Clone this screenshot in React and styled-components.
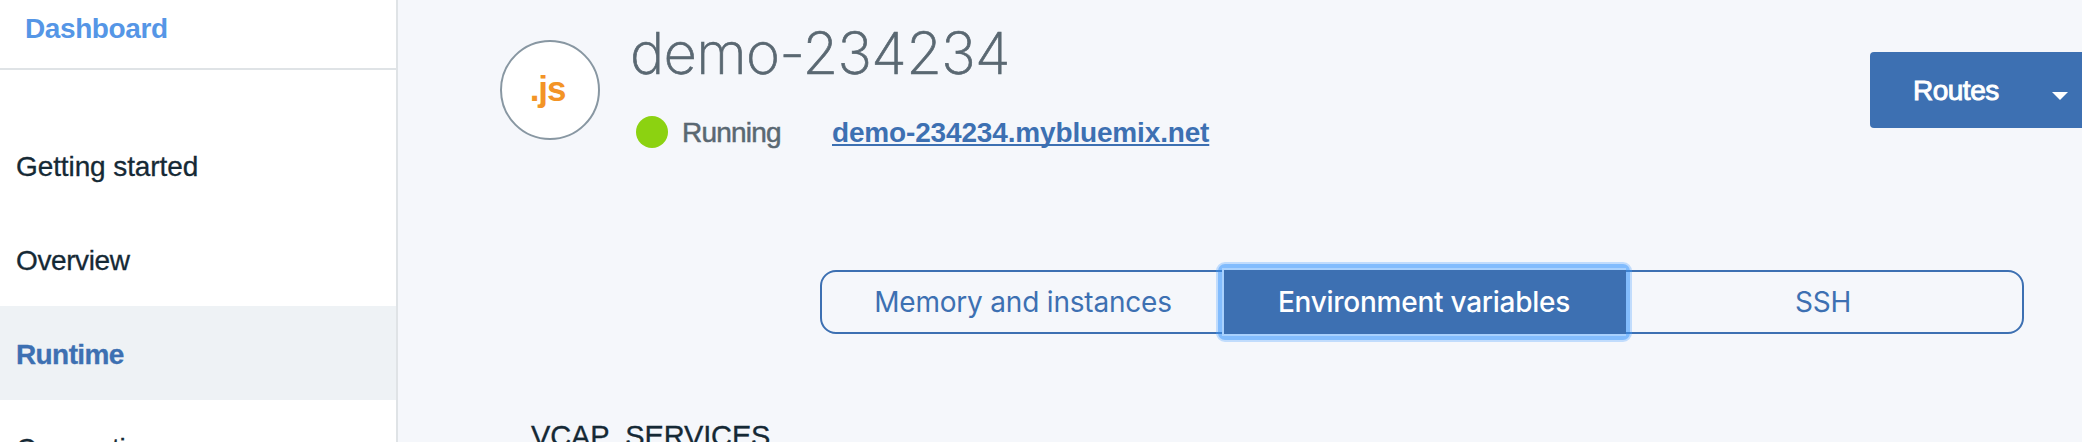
import React from "react";
import styled, { createGlobalStyle } from "styled-components";

const blue = "#3d70b2";

const GlobalStyle = createGlobalStyle`
  * { box-sizing: border-box; }
  body {
    margin: 0;
    overflow: hidden;
    background: #f5f7fb;
    font-family: "Liberation Sans", Arial, sans-serif;
    font-size: 28px;
    color: #152935;
  }
`;

const Page = styled.div`
  display: flex;
  width: 2082px;
  height: 442px;
  overflow: hidden;
`;

const Sidebar = styled.aside`
  width: 398px;
  flex: none;
  background: #fff;
  border-right: 2px solid #dfe3e6;
`;

const SidebarTitle = styled.div`
  height: 70px;
  padding: 13px 0 0 25px;
  border-bottom: 2px solid #dfe3e6;
  color: #5596e6;
  font-weight: 700;
  line-height: 32px;
  letter-spacing: -0.4px;
`;

const Nav = styled.nav`
  padding-top: 48px;
`;

const NavItem = styled.a`
  display: block;
  height: 94px;
  padding: 2px 0 0 16px;
  line-height: 94px;
  white-space: nowrap;
  letter-spacing: ${(p) => p.$spacing || "-0.1px"};
  background: ${(p) => (p.$active ? "#eef2f5" : "transparent")};
  color: ${(p) => (p.$active ? blue : "#152935")};
  font-weight: ${(p) => (p.$active ? 700 : 400)};
  -webkit-text-stroke: 0.3px currentColor;
`;

const Main = styled.main`
  flex: 1;
  min-width: 0;
`;

const Header = styled.header`
  display: flex;
  height: 270px;
  padding-left: 102px;
`;

const RuntimeBadge = styled.div`
  width: 100px;
  height: 100px;
  margin: 40px 30px 0 0;
  padding: 0 5px 0 0;
  border: 2px solid #8897a2;
  border-radius: 50%;
  background: #fff;
  color: #f39426;
  font-size: 35px;
  font-weight: 700;
  line-height: 94px;
  letter-spacing: -1.2px;
  text-align: center;
`;

const AppInfo = styled.div`
  flex: 1;
  padding-top: 18px;
`;

const AppName = styled.h1`
  margin: 0;
  height: 98px;
  font-family: Inter, sans-serif;
  font-size: 58px;
  font-weight: 200;
  line-height: 70px;
  letter-spacing: -0.7px;
  color: #5a6872;
  -webkit-text-stroke: 0.7px #5a6872;
`;

const StatusLine = styled.div`
  display: flex;
  align-items: center;
  height: 32px;
  padding-left: 6px;
`;

const StatusDot = styled.span`
  width: 32px;
  height: 32px;
  margin-right: 14px;
  border-radius: 50%;
  background: #8cd211;
`;

const StatusText = styled.span`
  width: 150px;
  padding-top: 1px;
  color: #5a6872;
  letter-spacing: -0.8px;
  -webkit-text-stroke: 0.5px #5a6872;
`;

const RouteLink = styled.a`
  padding-top: 1px;
  color: ${blue};
  font-weight: 700;
  letter-spacing: -0.16px;
  text-decoration: underline;
  text-decoration-thickness: 2px;
  text-underline-offset: 2px;
  text-decoration-skip-ink: none;
`;

const RoutesButton = styled.button`
  display: flex;
  align-items: center;
  width: 212px;
  height: 76px;
  margin-top: 52px;
  padding: 1px 14px 0 43px;
  border: 0;
  border-radius: 4px 0 0 4px;
  background: ${blue};
  color: #fff;
  font: 28px "Liberation Sans", Arial, sans-serif;
  letter-spacing: -0.5px;
  -webkit-text-stroke: 0.9px #fff;
  justify-content: space-between;
`;

const Caret = styled.span`
  margin-top: 11px;
  border: 8px solid transparent;
  border-top-color: #fff;
  border-bottom: 0;
`;

const Tabs = styled.div`
  display: flex;
  isolation: isolate;
  width: 1204px;
  height: 64px;
  margin-left: 422px;
  border: 2px solid ${blue};
  border-radius: 16px;
`;

const Tab = styled.button`
  flex: none;
  width: ${(p) => p.$width};
  padding: 0;
  border: 0;
  background: transparent;
  color: ${blue};
  font: 400 28px Inter, sans-serif;
  letter-spacing: -0.2px;
`;

const ActiveTab = styled(Tab)`
  position: relative;
  margin: -2px 0;
  background: ${blue};
  color: #fff;
  font-weight: 500;
  letter-spacing: -0.25px;
  box-shadow: 2px 0 0 0 ${blue}, 0 0 0 2px #a9d1fd;

  &::before,
  &::after {
    content: "";
    position: absolute;
    z-index: -1;
  }

  &::before {
    inset: -8px;
    border: 2px solid #c1dcfc;
    border-radius: 9px;
    background: #82bcfd;
  }

  &::after {
    inset: 0 -8px;
    border: solid #3d82d2;
    border-width: 2px 0;
  }
`;

const SectionTitle = styled.h2`
  margin: 85px 0 0 133px;
  font-size: 29px;
  font-weight: 400;
  line-height: 34px;
  letter-spacing: -0.15px;
  -webkit-text-stroke: 0.3px currentColor;
`;

export default function App() {
  return (
    <Page>
      <GlobalStyle />
      <Sidebar>
        <SidebarTitle>Dashboard</SidebarTitle>
        <Nav>
          <NavItem>Getting started</NavItem>
          <NavItem $spacing="-0.4px">Overview</NavItem>
          <NavItem $active $spacing="-0.6px">Runtime</NavItem>
          <NavItem>Connections</NavItem>
        </Nav>
      </Sidebar>
      <Main>
        <Header>
          <RuntimeBadge>.js</RuntimeBadge>
          <AppInfo>
            <AppName>demo-234234</AppName>
            <StatusLine>
              <StatusDot />
              <StatusText>Running</StatusText>
              <RouteLink>demo-234234.mybluemix.net</RouteLink>
            </StatusLine>
          </AppInfo>
          <RoutesButton>
            Routes
            <Caret />
          </RoutesButton>
        </Header>
        <Tabs>
          <Tab $width="402px">Memory and instances</Tab>
          <ActiveTab $width="400px">Environment variables</ActiveTab>
          <Tab $width="398px">SSH</Tab>
        </Tabs>
        <SectionTitle>VCAP_SERVICES</SectionTitle>
      </Main>
    </Page>
  );
}
